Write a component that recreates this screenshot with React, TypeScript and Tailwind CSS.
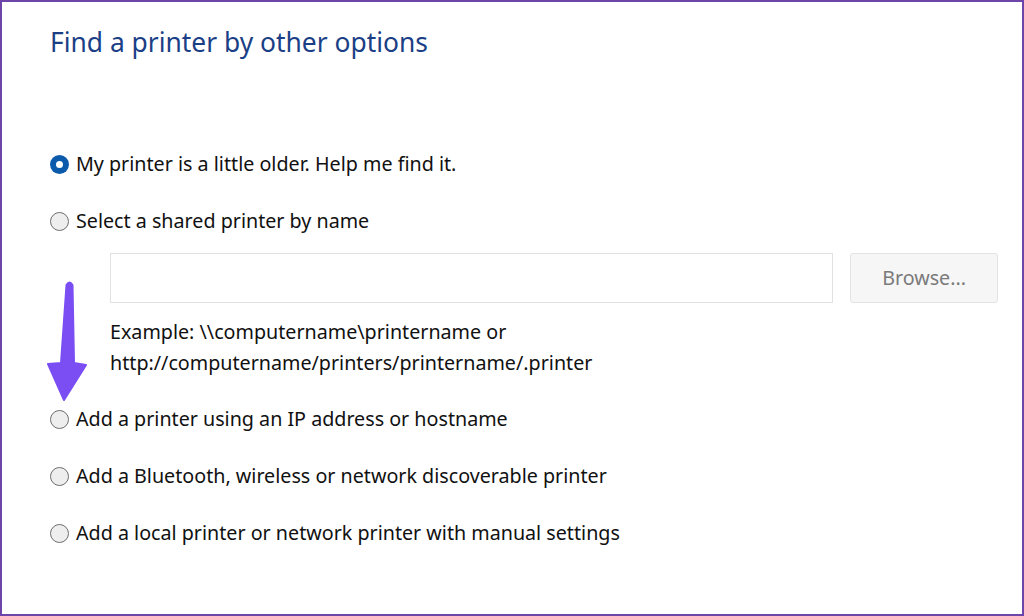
const options = [
  { label: "My printer is a little older. Help me find it.", checked: true },
  { label: "Select a shared printer by name", checked: false },
]

const moreOptions = [
  "Add a printer using an IP address or hostname",
  "Add a Bluetooth, wireless or network discoverable printer",
  "Add a local printer or network printer with manual settings",
]

function Radio({ checked }: { checked: boolean }) {
  if (checked) {
    return (
      <span className="flex h-[19px] w-[19px] shrink-0 items-center justify-center rounded-full bg-[#0c5aab]">
        <span className="h-[7px] w-[7px] rounded-full bg-white" />
      </span>
    )
  }
  return <span className="h-[19px] w-[19px] shrink-0 rounded-full border border-[#6e6e6e] bg-[#eeeeee]" />
}

function Option({ label, checked }: { label: string; checked: boolean }) {
  return (
    <label className="flex h-[40px] items-center gap-[7px] text-[19.7px] text-[#111]">
      <Radio checked={checked} />
      <span>{label}</span>
    </label>
  )
}

export default function App() {
  return (
    <div
      className="relative h-[616px] w-[1024px] overflow-hidden border-2 border-[#6d44a8] bg-white pl-[48px] pr-[24px]"
      style={{ fontFamily: '"Noto Sans", "Open Sans", sans-serif' }}
    >
      <h1 className="pt-[22px] text-[26.4px] leading-[36px] text-[#1b3f86]">Find a printer by other options</h1>

      <div className="mt-[84px] flex flex-col gap-[17px]">
        {options.map((o) => (
          <Option key={o.label} label={o.label} checked={o.checked} />
        ))}
      </div>

      <div className="ml-[60px] mt-[12px] flex gap-[17px]">
        <div className="h-[50px] w-[724px] border border-[#e1e1e1] bg-white" />
        <button className="h-[50px] w-[148px] rounded-[3px] border border-[#e3e3e3] bg-[#f6f6f6] text-[19.7px] text-[#7a7a7a]">
          Browse...
        </button>
      </div>

      <p className="ml-[60px] mt-[13px] text-[19.7px] leading-[31px] text-[#111]">
        Example: \\computername\printername or
        <br />
        http://computername/printers/printername/.printer
      </p>

      <div className="mt-[21px] flex flex-col gap-[17px]">
        {moreOptions.map((o) => (
          <Option key={o} label={o} checked={false} />
        ))}
      </div>

      {/* annotation arrow */}
      <svg className="absolute left-[40px] top-[270px]" width="56" height="140" viewBox="0 0 56 140">
        <path
          d="M24.5 13 Q27.5 8 30.5 13 L32 91 L44 93 L22 128 L6 92 L19 91 Z"
          fill="#7a4ef3"
          stroke="#7a4ef3"
          strokeWidth="2"
          strokeLinejoin="round"
        />
      </svg>
    </div>
  )
}
